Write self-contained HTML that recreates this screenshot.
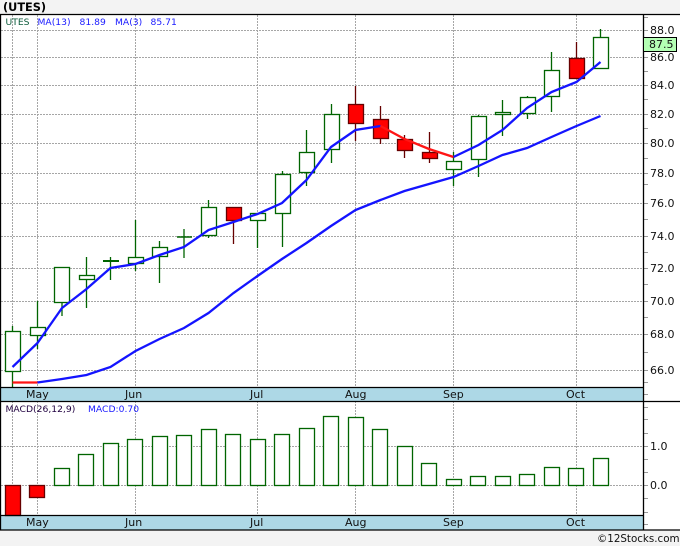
<!DOCTYPE html>
<html><head><meta charset="utf-8"><style>
html,body{margin:0;padding:0;width:680px;height:546px;overflow:hidden;background:#f3f3f3}
svg{display:block}
.g{stroke:#a6a6a6;stroke-width:1;stroke-dasharray:2 1;fill:none}
.t{stroke:#999;stroke-width:1;fill:none}
.k{stroke:#000;stroke-width:1.3;fill:none}
.u{stroke:#006400;stroke-width:1.3;fill:#fff}
.uw{stroke:#006400;stroke-width:1.3;fill:none}
.d{stroke:#660000;stroke-width:1.3;fill:#ff0000}
.dw{stroke:#660000;stroke-width:1.3;fill:none}
text{font-family:"DejaVu Sans","Liberation Sans",sans-serif;font-size:11px;fill:#111}
.l{font-size:9.2px}
.b{fill:#1a1aff}
</style></head><body>
<svg width="680" height="546" viewBox="0 0 680 546" xmlns="http://www.w3.org/2000/svg">
<rect x="0" y="0" width="680" height="546" fill="#f3f3f3"/>
<rect x="0" y="14" width="680" height="516" fill="#fff"/>
<rect x="1" y="387" width="642" height="14" fill="#add8e6"/>
<rect x="1" y="516" width="642" height="14" fill="#add8e6"/>

<path class="g" d="M1 30.5H643M1 57.5H643M1 85.5H643M1 114.5H643M1 143.5H643M1 173.5H643M1 203.5H643M1 236.5H643M1 268.5H643M1 301.5H643M1 334.5H643M1 370.5H643M1 446.5H643M1 485.5H643"/>
<path class="g" d="M12.5 15V387M37.5 15V387M135.5 15V387M257.5 15V387M355.5 15V387M453.5 15V387M576.5 15V387M12.5 401V516M37.5 401V516M135.5 401V516M257.5 401V516M355.5 401V516M453.5 401V516M576.5 401V516"/>

<!-- axis ticks -->
<path class="t" d="M643 17.5H648M643 30.5H648M643 43.5H648M643 57.5H648M643 71.5H648M643 85.5H648M643 99.5H648M643 114.5H648M643 128.5H648M643 143.5H648M643 158.5H648M643 173.5H648M643 184.5H648M643 203.5H648M643 219.5H648M643 236.5H648M643 252.5H648M643 268.5H648M643 284.5H648M643 301.5H648M643 317.5H648M643 334.5H648M643 352.5H648M643 370.5H648M643 382.5H648M643 394.5H648M643 407.5H648M643 419.5H648M643 433.5H648M643 446.5H648M643 459.5H648M643 472.5H648M643 485.5H648M643 498.5H648M643 512.5H648M643 524.5H648"/>

<!-- wicks -->
<path class="uw" d="M12.5 326V331M12.5 371V387M37.5 301V327M37.5 335V349M62 302V316M86.5 257V275M86.5 279V308M110.5 257V280M135.5 220V257M135.5 263V271M159.5 241V247M159.5 256V283M184 229V258M208.5 200V207M208.5 235V238M257.5 220V248M282.5 171V174M282.5 213V247M306.5 130V152M306.5 172V186M331.5 104V114M331.5 149V163M453.5 152V161M453.5 169V186M478.5 115V116M478.5 159V177M502.5 100V112M502.5 114V136M527.5 96V97M527.5 113V119M551.5 52V70M551.5 96V112M600.5 29V37"/>
<path class="dw" d="M233.5 220V244M355.5 86V104M355.5 123V141M380.5 106V119M380.5 138V144M404.5 135V139M404.5 150V158M429.5 132V152M429.5 158V163M576.5 42V58"/>
<path d="M103 261H119M177 237H192" stroke="#006400" stroke-width="1.4" fill="none"/>
<path d="M103 261H119" stroke="#006400" stroke-width="2" fill="none"/>

<!-- bodies up -->
<rect class="u" x="5.5" y="331.5" width="15" height="40"/>
<rect class="u" x="30.5" y="327.5" width="15" height="8"/>
<rect class="u" x="54.5" y="267.5" width="15" height="35"/>
<rect class="u" x="79.5" y="275.5" width="15" height="4"/>
<rect class="u" x="128.5" y="257.5" width="15" height="6"/>
<rect class="u" x="152.5" y="247.5" width="15" height="9"/>
<rect class="u" x="201.5" y="207.5" width="15" height="28"/>
<rect class="u" x="250.5" y="213.5" width="15" height="7"/>
<rect class="u" x="275.5" y="174.5" width="15" height="39"/>
<rect class="u" x="299.5" y="152.5" width="15" height="20"/>
<rect class="u" x="324.5" y="114.5" width="15" height="35"/>
<rect class="u" x="446.5" y="161.5" width="15" height="8"/>
<rect class="u" x="471.5" y="116.5" width="15" height="43"/>
<rect class="u" x="495.5" y="112.5" width="15" height="2"/>
<rect class="u" x="520.5" y="97.5" width="15" height="16"/>
<rect class="u" x="544.5" y="70.5" width="15" height="26"/>
<rect class="u" x="593.5" y="37.5" width="15" height="31"/>
<!-- bodies down -->
<rect class="d" x="226.5" y="207.5" width="15" height="13"/>
<rect class="d" x="348.5" y="104.5" width="15" height="19"/>
<rect class="d" x="373.5" y="119.5" width="15" height="19"/>
<rect class="d" x="397.5" y="139.5" width="15" height="11"/>
<rect class="d" x="422.5" y="152.5" width="15" height="6"/>
<rect class="d" x="569.5" y="58.5" width="15" height="20"/>

<!-- MA lines -->
<polyline fill="none" stroke="#1414ff" stroke-width="2.3" points="12.5,367 37.5,343 62,308 86.5,289 110.5,268 135.5,264 159.5,255 184,247 208.5,230 233.5,222 257.5,214 282,203 306.5,180 331,147 355.5,130 380.5,126"/>
<polyline fill="none" stroke="#ff1414" stroke-width="2.3" points="380.5,126 404.5,139 429,149 453.5,157"/>
<polyline fill="none" stroke="#1414ff" stroke-width="2.3" points="453.5,157 478.5,145 502.5,130 527,108 551.5,92 576.5,82 600.5,62"/>
<polyline fill="none" stroke="#ff1414" stroke-width="2.3" points="12.5,382.5 37.5,382.5"/>
<polyline fill="none" stroke="#1414ff" stroke-width="2.3" points="37.5,382.5 62,379 86.5,375 110.5,367 135.5,351 159.5,339 184,328 208.5,313 233.5,293 257.5,276 282,259 306.5,243 331,226 355.5,210 380.5,200 404.5,191 429,184 453.5,177 478.5,166 502.5,155 527,148 551.5,137 576.5,126 600.5,116"/>

<!-- MACD bars -->
<rect class="d" x="5.5" y="485.5" width="15" height="30"/>
<rect class="d" x="29.5" y="485.5" width="15" height="12"/>
<g class="u">
<rect x="54.5" y="468.5" width="15" height="17"/>
<rect x="78.5" y="454.5" width="15" height="31"/>
<rect x="103.5" y="443.5" width="15" height="42"/>
<rect x="127.5" y="439.5" width="15" height="46"/>
<rect x="152.5" y="436.5" width="15" height="49"/>
<rect x="176.5" y="435.5" width="15" height="50"/>
<rect x="201.5" y="429.5" width="15" height="56"/>
<rect x="225.5" y="434.5" width="15" height="51"/>
<rect x="250.5" y="439.5" width="15" height="46"/>
<rect x="274.5" y="434.5" width="15" height="51"/>
<rect x="299.5" y="428.5" width="15" height="57"/>
<rect x="323.5" y="416.5" width="15" height="69"/>
<rect x="348.5" y="417.5" width="15" height="68"/>
<rect x="372.5" y="429.5" width="15" height="56"/>
<rect x="397.5" y="446.5" width="15" height="39"/>
<rect x="421.5" y="463.5" width="15" height="22"/>
<rect x="446.5" y="479.5" width="15" height="6"/>
<rect x="470.5" y="476.5" width="15" height="9"/>
<rect x="495.5" y="476.5" width="15" height="9"/>
<rect x="519.5" y="474.5" width="15" height="11"/>
<rect x="544.5" y="467.5" width="15" height="18"/>
<rect x="568.5" y="468.5" width="15" height="17"/>
<rect x="593.5" y="458.5" width="15" height="27"/>
</g>

<!-- frame -->
<path class="k" d="M0 14.5H680M0 401.5H680M0 530H680M0 387.5H643M0 515.5H643M0.5 14V530M643.5 14V530"/>

<!-- current price -->
<rect x="643.5" y="37.5" width="33" height="14" fill="#b4ffb4" stroke="#000" stroke-width="1"/>
<text x="649" y="48">87.5</text>

<!-- labels -->
<text x="650" y="34">88.0</text>
<text x="650" y="61">86.0</text>
<text x="650" y="89">84.0</text>
<text x="650" y="118">82.0</text>
<text x="650" y="147">80.0</text>
<text x="650" y="177">78.0</text>
<text x="650" y="207">76.0</text>
<text x="650" y="240">74.0</text>
<text x="650" y="272">72.0</text>
<text x="650" y="305">70.0</text>
<text x="650" y="338">68.0</text>
<text x="650" y="374">66.0</text>
<text x="650" y="450">1.0</text>
<text x="650" y="489">0.0</text>

<text x="26" y="398">May</text><text x="125" y="398">Jun</text><text x="250" y="398">Jul</text><text x="345" y="398">Aug</text><text x="443" y="398">Sep</text><text x="566" y="398">Oct</text>
<text x="26" y="526">May</text><text x="125" y="526">Jun</text><text x="250" y="526">Jul</text><text x="345" y="526">Aug</text><text x="443" y="526">Sep</text><text x="566" y="526">Oct</text>

<text x="5.5" y="25" class="l" style="fill:#0b5a3a">UTES</text>
<text x="37.5" y="25" class="l b">MA(13)</text>
<text x="79.5" y="25" class="l b">81.89</text>
<text x="115" y="25" class="l b">MA(3)</text>
<text x="150.5" y="25" class="l b">85.71</text>
<text x="5.5" y="412" class="l" style="fill:#200040">MACD(26,12,9)</text>
<text x="88" y="412" class="l b">MACD:0.70</text>

<text x="3" y="11" style="font-weight:bold;font-size:11.3px;fill:#000">(UTES)</text>
<text x="597" y="542" style="font-size:10.3px;fill:#111">©12Stocks.com</text>
</svg>
</body></html>
